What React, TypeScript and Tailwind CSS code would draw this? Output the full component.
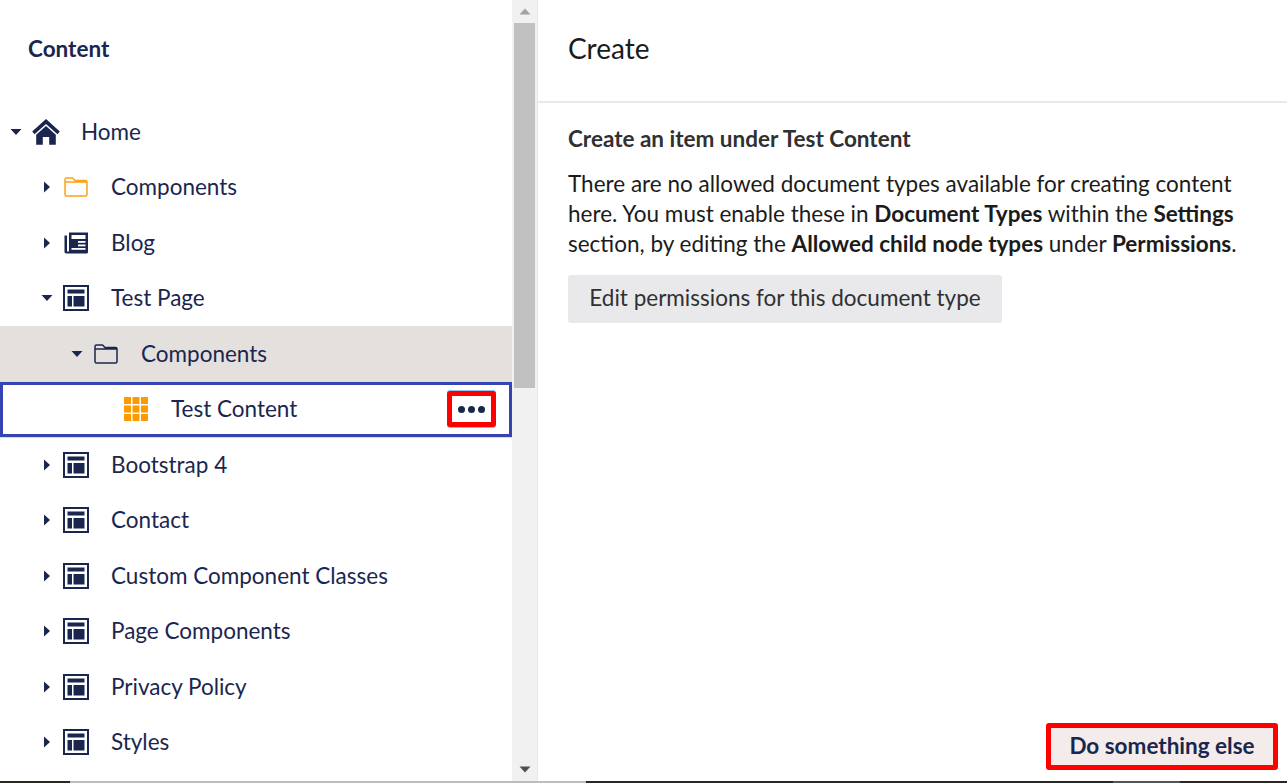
import React from "react";

const navy = "#1b264f";

function Caret({ open }: { open?: boolean }) {
  return (
    <svg width="12" height="12" viewBox="0 0 12 12" className="shrink-0">
      {open ? <path d="M0.5 3h11L6 9z" fill={navy} /> : <path d="M3 0.5v11L9 6z" fill={navy} />}
    </svg>
  );
}

function HomeIcon() {
  return (
    <svg width="28" height="26" viewBox="0 0 28 26">
      <path d="M14 0 L27.8 12.5 L25.5 15.2 L14 5 L2.5 15.2 L0.2 12.5 Z" fill={navy} />
      <path d="M14 7 L23.8 15.7 V25.8 H17.2 V18 H10.8 V25.8 H4.2 V15.7 Z" fill={navy} />
    </svg>
  );
}

function FolderIcon({ color }: { color: string }) {
  return (
    <svg width="24" height="20" viewBox="0 0 24 20" fill="none">
      <path
        d="M1 5V2.5C1 1.7 1.7 1 2.5 1H8.5L11 3.5H21.5C22.3 3.5 23 4.2 23 5V17.5C23 18.3 22.3 19 21.5 19H2.5C1.7 19 1 18.3 1 17.5V5H23"
        stroke={color}
        strokeWidth="1.5"
      />
    </svg>
  );
}

function NewsIcon() {
  return (
    <svg width="24" height="22" viewBox="0 0 24 22">
      <path d="M5 0.5H24V20C24 21 23 21.5 22.5 21.5H2.5C1 21.5 0.5 20.5 0.5 19.5V3.5H3V19C3 19.5 3.3 19.5 3.6 19.5C4 19.5 5 19.5 5 19Z" fill={navy} />
      <rect x="7.5" y="3" width="14" height="4" fill="#fff" />
      <rect x="14" y="9" width="7.5" height="1.8" fill="#fff" />
      <rect x="14" y="12.5" width="7.5" height="1.8" fill="#fff" />
      <rect x="7.5" y="16" width="14" height="1.8" fill="#fff" />
    </svg>
  );
}

function PageIcon() {
  return (
    <svg width="26" height="26" viewBox="0 0 26 26">
      <rect x="1" y="1" width="24" height="24" fill="none" stroke={navy} strokeWidth="2" />
      <rect x="4.5" y="4.5" width="17" height="4" fill={navy} />
      <rect x="4.5" y="11" width="4.5" height="10.5" fill={navy} />
      <rect x="10.5" y="11" width="11" height="10.5" fill={navy} />
    </svg>
  );
}

function GridIcon() {
  const cells = [0, 8.5, 17];
  return (
    <svg width="24" height="24" viewBox="0 0 24 24">
      {cells.map((y) =>
        cells.map((x) => <rect key={`${x}-${y}`} x={x} y={y} width="7" height="7" fill="#ff9900" />)
      )}
    </svg>
  );
}

interface Row {
  name: string;
  level: number;
  icon: React.ReactNode;
  open?: boolean;
  leaf?: boolean;
  tone?: string;
}

const rows: Row[] = [
  { name: "Home", level: 0, icon: <HomeIcon />, open: true },
  { name: "Components", level: 1, icon: <FolderIcon color="#ffa31a" /> },
  { name: "Blog", level: 1, icon: <NewsIcon /> },
  { name: "Test Page", level: 1, icon: <PageIcon />, open: true },
  { name: "Components", level: 2, icon: <FolderIcon color={navy} />, open: true, tone: "muted" },
  { name: "Test Content", level: 3, icon: <GridIcon />, leaf: true, tone: "active" },
  { name: "Bootstrap 4", level: 1, icon: <PageIcon /> },
  { name: "Contact", level: 1, icon: <PageIcon /> },
  { name: "Custom Component Classes", level: 1, icon: <PageIcon /> },
  { name: "Page Components", level: 1, icon: <PageIcon /> },
  { name: "Privacy Policy", level: 1, icon: <PageIcon /> },
  { name: "Styles", level: 1, icon: <PageIcon /> },
];

const indents = ["pl-[10px]", "pl-[41px]", "pl-[71px]", "pl-[98px] pr-[13px]"];

function TreeRow({ row }: { row: Row }) {
  const active = row.tone === "active";
  return (
    <div
      className={`flex h-[55.5px] items-center ${indents[row.level]} ${
        row.tone === "muted" ? "bg-[#e4e0dd]" : ""
      } ${active ? "border-[3px] border-[#3544b1] shadow-[0_0_0_1px_#d8dbf0]" : ""}`}
    >
      <span className={`flex shrink-0 items-center ${row.level === 0 ? "w-[22px]" : "w-[21px]"}`}>
        {!row.leaf && <Caret open={row.open} />}
      </span>
      <span className="flex w-[28px] shrink-0 items-center justify-center">{row.icon}</span>
      <span className="ml-[21px] text-[22.5px] text-[#1b264f]">{row.name}</span>
      {active && (
        <span className="ml-auto flex h-[36px] w-[49px] items-center justify-center gap-[3px] rounded-[3px] border-[5px] border-[#ff0000] bg-white shadow-[0_-1px_0_#8cc4f0,0_1px_0_#8cc4f0]">
          <span className="h-[7px] w-[7px] rounded-full bg-[#1b264f]" />
          <span className="h-[7px] w-[7px] rounded-full bg-[#1b264f]" />
          <span className="h-[7px] w-[7px] rounded-full bg-[#1b264f]" />
        </span>
      )}
    </div>
  );
}

export default function App() {
  return (
    <div className="flex h-[783px] w-[1287px] flex-col overflow-hidden bg-white font-['Lato','Open_Sans',sans-serif]">
      <div className="flex min-h-0 flex-1">
        <div className="w-[512px] shrink-0">
          <div className="flex h-[104px] items-start pl-[28px] pt-[34px] text-[22.5px] font-bold leading-[30px] text-[#1b264f]">Content</div>
          {rows.map((row, i) => (
            <TreeRow key={i} row={row} />
          ))}
        </div>

        <div className="flex w-[26px] shrink-0 flex-col border-r border-[#e9e9eb] bg-[#f1f1f1] pl-[2px] pr-[2px]">
          <div className="flex h-[23px] items-center justify-center">
            <svg width="12" height="7" viewBox="0 0 12 7"><path d="M6 0.5 L11.5 6.5 H0.5Z" fill="#a3a3a3" /></svg>
          </div>
          <div className="h-[365px] bg-[#c1c1c1]" />
          <div className="mt-auto flex h-[23px] items-center justify-center">
            <svg width="12" height="7" viewBox="0 0 12 7"><path d="M0.5 0.5 H11.5 L6 6.5Z" fill="#505050" /></svg>
          </div>
        </div>

        <div className="flex min-w-0 flex-1 flex-col">
          <div className="flex h-[103px] shrink-0 items-start border-b-2 border-[#e9e9eb] pl-[30px] pt-[30px] text-[28px] leading-[36px] text-[#1b1b1b]">
            Create
          </div>
          <div className="flex-1 pl-[30px] pr-[40px] pt-[21px] text-[22.5px] leading-[30px] text-[#1b1b1b]">
            <div className="font-bold text-[#303033]">Create an item under Test Content</div>
            <p className="mt-[15px] w-[680px]">
              There are no allowed document types available for creating content here. You must enable these in{" "}
              <b>Document Types</b> within the <b>Settings</b> section, by editing the <b>Allowed child node types</b>{" "}
              under <b>Permissions</b>.
            </p>
            <div className="mt-[16px] flex h-[48px] w-[434px] items-center justify-center rounded-[3px] bg-[#e9e9eb] pb-[2px] text-[#303033]">
              Edit permissions for this document type
            </div>
          </div>
          <div className="flex justify-end pb-[11px] pr-[9px]">
            <div className="flex h-[47px] w-[232px] items-center justify-center rounded-[3px] border-[5px] border-[#ff0000] bg-[#f3ecea] pb-[2px] text-[22.5px] font-bold text-[#1b264f]">
              Do something else
            </div>
          </div>
        </div>
      </div>

      <div className="flex h-[2px] shrink-0">
        <div className="w-[70px] bg-[#2a2720]" />
        <div className="w-[516px] bg-[#bdbdbd]" />
        <div className="w-[527px] bg-[#272727]" />
        <div className="w-[67px] bg-[#555555]" />
        <div className="flex-1 bg-[#2a2622]" />
      </div>
    </div>
  );
}
